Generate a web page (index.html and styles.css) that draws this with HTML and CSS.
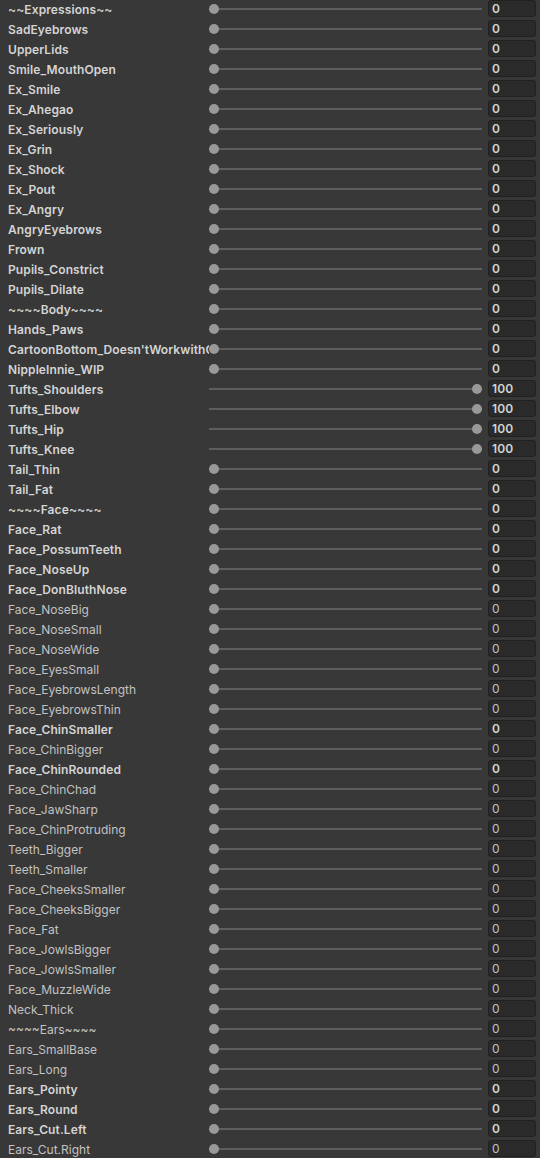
FILE: index.html
```html
<!DOCTYPE html>
<html>
<head>
<meta charset="utf-8">
<link rel="stylesheet" href="styles.css">
</head>
<body>
<div class="list">
<div class="row b"><div class="label">~~Expressions~~</div><div class="slider"><span class="thumb"></span></div><div class="field">0</div></div>
<div class="row b"><div class="label">SadEyebrows</div><div class="slider"><span class="thumb"></span></div><div class="field">0</div></div>
<div class="row b"><div class="label">UpperLids</div><div class="slider"><span class="thumb"></span></div><div class="field">0</div></div>
<div class="row b"><div class="label">Smile_MouthOpen</div><div class="slider"><span class="thumb"></span></div><div class="field">0</div></div>
<div class="row b"><div class="label">Ex_Smile</div><div class="slider"><span class="thumb"></span></div><div class="field">0</div></div>
<div class="row b"><div class="label">Ex_Ahegao</div><div class="slider"><span class="thumb"></span></div><div class="field">0</div></div>
<div class="row b"><div class="label">Ex_Seriously</div><div class="slider"><span class="thumb"></span></div><div class="field">0</div></div>
<div class="row b"><div class="label">Ex_Grin</div><div class="slider"><span class="thumb"></span></div><div class="field">0</div></div>
<div class="row b"><div class="label">Ex_Shock</div><div class="slider"><span class="thumb"></span></div><div class="field">0</div></div>
<div class="row b"><div class="label">Ex_Pout</div><div class="slider"><span class="thumb"></span></div><div class="field">0</div></div>
<div class="row b"><div class="label">Ex_Angry</div><div class="slider"><span class="thumb"></span></div><div class="field">0</div></div>
<div class="row b"><div class="label">AngryEyebrows</div><div class="slider"><span class="thumb"></span></div><div class="field">0</div></div>
<div class="row b"><div class="label">Frown</div><div class="slider"><span class="thumb"></span></div><div class="field">0</div></div>
<div class="row b"><div class="label">Pupils_Constrict</div><div class="slider"><span class="thumb"></span></div><div class="field">0</div></div>
<div class="row b"><div class="label">Pupils_Dilate</div><div class="slider"><span class="thumb"></span></div><div class="field">0</div></div>
<div class="row b"><div class="label">~~~~Body~~~~</div><div class="slider"><span class="thumb"></span></div><div class="field">0</div></div>
<div class="row b"><div class="label">Hands_Paws</div><div class="slider"><span class="thumb"></span></div><div class="field">0</div></div>
<div class="row b"><div class="label">CartoonBottom_Doesn'tWorkwithCustomClothes</div><div class="slider"><span class="thumb"></span></div><div class="field">0</div></div>
<div class="row b"><div class="label">NippleInnie_WIP</div><div class="slider"><span class="thumb"></span></div><div class="field">0</div></div>
<div class="row b"><div class="label">Tufts_Shoulders</div><div class="slider"><span class="thumb max"></span></div><div class="field">100</div></div>
<div class="row b"><div class="label">Tufts_Elbow</div><div class="slider"><span class="thumb max"></span></div><div class="field">100</div></div>
<div class="row b"><div class="label">Tufts_Hip</div><div class="slider"><span class="thumb max"></span></div><div class="field">100</div></div>
<div class="row b"><div class="label">Tufts_Knee</div><div class="slider"><span class="thumb max"></span></div><div class="field">100</div></div>
<div class="row b"><div class="label">Tail_Thin</div><div class="slider"><span class="thumb"></span></div><div class="field">0</div></div>
<div class="row b"><div class="label">Tail_Fat</div><div class="slider"><span class="thumb"></span></div><div class="field">0</div></div>
<div class="row b"><div class="label">~~~~Face~~~~</div><div class="slider"><span class="thumb"></span></div><div class="field">0</div></div>
<div class="row b"><div class="label">Face_Rat</div><div class="slider"><span class="thumb"></span></div><div class="field">0</div></div>
<div class="row b"><div class="label">Face_PossumTeeth</div><div class="slider"><span class="thumb"></span></div><div class="field">0</div></div>
<div class="row b"><div class="label">Face_NoseUp</div><div class="slider"><span class="thumb"></span></div><div class="field">0</div></div>
<div class="row b"><div class="label">Face_DonBluthNose</div><div class="slider"><span class="thumb"></span></div><div class="field">0</div></div>
<div class="row"><div class="label">Face_NoseBig</div><div class="slider"><span class="thumb"></span></div><div class="field">0</div></div>
<div class="row"><div class="label">Face_NoseSmall</div><div class="slider"><span class="thumb"></span></div><div class="field">0</div></div>
<div class="row"><div class="label">Face_NoseWide</div><div class="slider"><span class="thumb"></span></div><div class="field">0</div></div>
<div class="row"><div class="label">Face_EyesSmall</div><div class="slider"><span class="thumb"></span></div><div class="field">0</div></div>
<div class="row"><div class="label">Face_EyebrowsLength</div><div class="slider"><span class="thumb"></span></div><div class="field">0</div></div>
<div class="row"><div class="label">Face_EyebrowsThin</div><div class="slider"><span class="thumb"></span></div><div class="field">0</div></div>
<div class="row b"><div class="label">Face_ChinSmaller</div><div class="slider"><span class="thumb"></span></div><div class="field">0</div></div>
<div class="row"><div class="label">Face_ChinBigger</div><div class="slider"><span class="thumb"></span></div><div class="field">0</div></div>
<div class="row b"><div class="label">Face_ChinRounded</div><div class="slider"><span class="thumb"></span></div><div class="field">0</div></div>
<div class="row"><div class="label">Face_ChinChad</div><div class="slider"><span class="thumb"></span></div><div class="field">0</div></div>
<div class="row"><div class="label">Face_JawSharp</div><div class="slider"><span class="thumb"></span></div><div class="field">0</div></div>
<div class="row"><div class="label">Face_ChinProtruding</div><div class="slider"><span class="thumb"></span></div><div class="field">0</div></div>
<div class="row"><div class="label">Teeth_Bigger</div><div class="slider"><span class="thumb"></span></div><div class="field">0</div></div>
<div class="row"><div class="label">Teeth_Smaller</div><div class="slider"><span class="thumb"></span></div><div class="field">0</div></div>
<div class="row"><div class="label">Face_CheeksSmaller</div><div class="slider"><span class="thumb"></span></div><div class="field">0</div></div>
<div class="row"><div class="label">Face_CheeksBigger</div><div class="slider"><span class="thumb"></span></div><div class="field">0</div></div>
<div class="row"><div class="label">Face_Fat</div><div class="slider"><span class="thumb"></span></div><div class="field">0</div></div>
<div class="row"><div class="label">Face_JowlsBigger</div><div class="slider"><span class="thumb"></span></div><div class="field">0</div></div>
<div class="row"><div class="label">Face_JowlsSmaller</div><div class="slider"><span class="thumb"></span></div><div class="field">0</div></div>
<div class="row"><div class="label">Face_MuzzleWide</div><div class="slider"><span class="thumb"></span></div><div class="field">0</div></div>
<div class="row"><div class="label">Neck_Thick</div><div class="slider"><span class="thumb"></span></div><div class="field">0</div></div>
<div class="row"><div class="label">~~~~Ears~~~~</div><div class="slider"><span class="thumb"></span></div><div class="field">0</div></div>
<div class="row"><div class="label">Ears_SmallBase</div><div class="slider"><span class="thumb"></span></div><div class="field">0</div></div>
<div class="row"><div class="label">Ears_Long</div><div class="slider"><span class="thumb"></span></div><div class="field">0</div></div>
<div class="row b"><div class="label">Ears_Pointy</div><div class="slider"><span class="thumb"></span></div><div class="field">0</div></div>
<div class="row b"><div class="label">Ears_Round</div><div class="slider"><span class="thumb"></span></div><div class="field">0</div></div>
<div class="row b"><div class="label">Ears_Cut.Left</div><div class="slider"><span class="thumb"></span></div><div class="field">0</div></div>
<div class="row"><div class="label">Ears_Cut.Right</div><div class="slider"><span class="thumb"></span></div><div class="field">0</div></div>
</div>
</body>
</html>
```
FILE: styles.css
```css
html, body {
  margin: 0;
  padding: 0;
  background: #383838;
  overflow: hidden;
}
.list {
  width: 540px;
  font-family: Inter, "Noto Sans", sans-serif;
  font-size: 12px;
  color: #c2c2c2;
}
.row {
  display: flex;
  align-items: flex-start;
  height: 20px;
}
.label {
  width: 201px;
  padding-left: 8px;
  box-sizing: content-box;
  white-space: nowrap;
  overflow: hidden;
  line-height: 19px;
  flex: none;
}
.row.b .label,
.row.b .field {
  font-weight: 600;
  color: #d4d4d4;
  letter-spacing: 0.1px;
}
.slider {
  position: relative;
  width: 273px;
  height: 18px;
  flex: none;
}
.slider::before {
  content: "";
  position: absolute;
  left: 0;
  right: 0;
  top: 8px;
  height: 2px;
  background: #5e5e5e;
}
.thumb {
  position: absolute;
  left: 0;
  top: 4px;
  width: 10px;
  height: 10px;
  border-radius: 50%;
  background: #999999;
}
.thumb.max {
  left: 263px;
}
.field {
  margin-left: 6px;
  width: 48px;
  height: 17px;
  box-sizing: border-box;
  background: #2a2a2a;
  border: 1px solid #212121;
  border-radius: 3px;
  padding-left: 3px;
  line-height: 16px;
  flex: none;
}
```
